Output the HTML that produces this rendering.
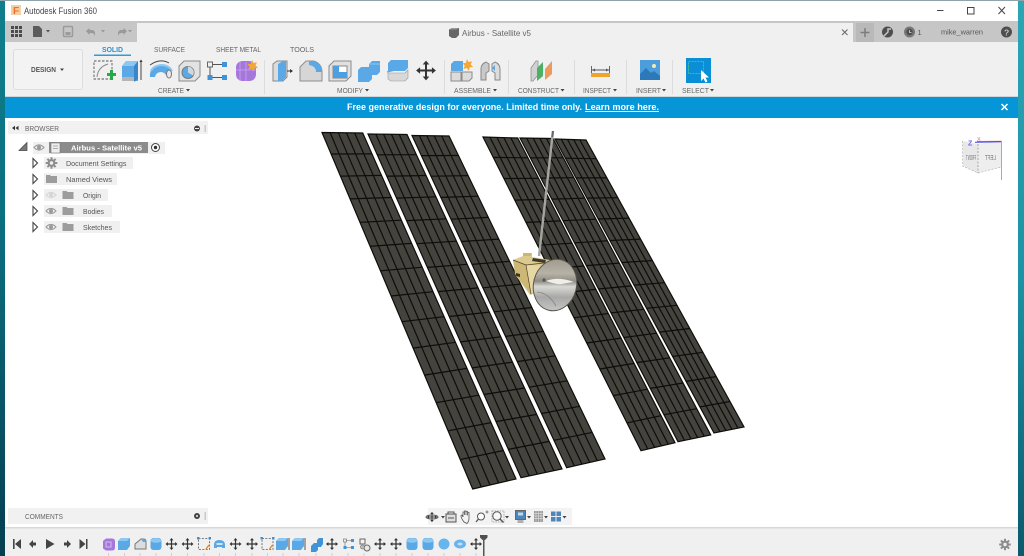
<!DOCTYPE html>
<html><head><meta charset="utf-8"><title>Autodesk Fusion 360</title>
<style>
html,body{margin:0;padding:0;background:#0a6f80;width:1024px;height:556px;overflow:hidden}
svg{display:block;position:absolute;left:0;top:0;filter:blur(.35px)}
text{font-family:"Liberation Sans",sans-serif;fill:#555}
</style></head><body>
<svg width="1024" height="556" viewBox="0 0 1024 556" xmlns="http://www.w3.org/2000/svg">
<defs>
<linearGradient id="tl" x1="0" y1="0" x2="0" y2="1"><stop offset="0" stop-color="#0f7f8c"/><stop offset=".4" stop-color="#0b6f80"/><stop offset="1" stop-color="#063f50"/></linearGradient>
<linearGradient id="tr" x1="0" y1="0" x2="0" y2="1"><stop offset="0" stop-color="#2aa6b4"/><stop offset=".5" stop-color="#1c93a6"/><stop offset="1" stop-color="#0a5a6c"/></linearGradient>
<linearGradient id="dish" x1=".3" y1="0" x2=".5" y2="1"><stop offset="0" stop-color="#9d988c"/><stop offset=".3" stop-color="#b7b2a6"/><stop offset=".45" stop-color="#8f8c84"/><stop offset=".55" stop-color="#d9d8d4"/><stop offset=".75" stop-color="#a8a8a6"/><stop offset="1" stop-color="#c4c4c2"/></linearGradient>
<g id="mv" fill="#333"><path d="M-.6-4h1.2v8h-1.2zM-4-.6h8v1.2h-8z"/><path d="M0-6l2 2.4h-4zM0 6l2-2.4h-4zM-6 0l2.4-2v4zM6 0l-2.4-2v4z"/></g>
<g id="cyl"><rect x="-5.5" y="-6" width="11" height="12" rx="3" fill="#5aa9e6"/><ellipse cx="0" cy="-3.5" rx="5.5" ry="2.3" fill="#8cc8f2"/></g>
<g id="box"><path d="M-6-3l3-3h9v8l-3 4h-9z" fill="#5aa9e6"/><path d="M-6-3h9l3-3h-9z" fill="#8cc8f2"/></g>
<g id="sk" fill="none"><rect x="-5.5" y="-5.5" width="11" height="11" stroke="#555" stroke-width=".8" stroke-dasharray="2 1.4"/><path d="M2 5l3-4" stroke="#e8852b" stroke-width="1.4"/><rect x="-7" y="-7" width="2.4" height="2.4" fill="#3f8fd0"/><rect x="4.6" y="-7" width="2.4" height="2.4" fill="#3f8fd0"/></g>
<g id="eye"><path d="M-5 0q5-5 10 0q-5 5-10 0z" fill="none" stroke="#9a9a9a" stroke-width="1.1"/><circle r="2" fill="#9a9a9a"/></g>
<path id="folder" d="M-5.5-4h4l1 1h6v7h-11z" fill="#9c9c9c"/>
<path id="exp" d="M0-4.5l4.5 4.5l-4.5 4.5z" fill="#fff" stroke="#444" stroke-width="1.1"/>
<g id="gear" fill="#8d8d8d"><circle r="3.9"/><path d="M-1-5.8h2v11.6h-2zM-5.8-1h11.6v2h-11.6z"/><path d="M-1-5.8h2v11.6h-2z" transform="rotate(45)"/><path d="M-1-5.8h2v11.6h-2z" transform="rotate(-45)"/><circle r="1.7" fill="#f0f0f0"/></g>
</defs>

<!-- desktop -->
<rect width="6" height="556" fill="url(#tl)"/>
<rect x="1018" width="6" height="556" fill="url(#tr)"/>
<rect x="5" y="0" width="1013" height="556" fill="#fff"/>
<rect x="0" y="0" width="1024" height="1" fill="#8fa3a8"/>

<!-- title bar -->
<rect x="11" y="5" width="10" height="10" fill="#f7cfa6"/>
<text x="13" y="14" font-size="10" font-weight="bold" style="fill:#e8722a">F</text>
<text x="24" y="14" font-size="9" textLength="73" lengthAdjust="spacingAndGlyphs" style="fill:#444">Autodesk Fusion 360</text>
<path d="M937 10.5h6.5" stroke="#444" stroke-width="1"/>
<rect x="967.5" y="7.5" width="6.5" height="6.5" fill="none" stroke="#444"/>
<path d="M998.5 7l6.5 7M1005 7l-6.5 7" stroke="#444"/>

<!-- tab bar -->
<rect x="5" y="21" width="1013" height="21" fill="#c6c6c6"/>
<rect x="137" y="23" width="716" height="19" fill="#f0f0f0"/>
<g fill="#4b4b4b"><rect x="11" y="26" width="3" height="3"/><rect x="15" y="26" width="3" height="3"/><rect x="19" y="26" width="3" height="3"/><rect x="11" y="30" width="3" height="3"/><rect x="15" y="30" width="3" height="3"/><rect x="19" y="30" width="3" height="3"/><rect x="11" y="34" width="3" height="3"/><rect x="15" y="34" width="3" height="3"/><rect x="19" y="34" width="3" height="3"/></g>
<path d="M33 26h6l3 3v8h-9z" fill="#5c5c5c"/><path d="M46 30h4l-2 2.5z" fill="#555"/>
<rect x="63.500" y="26.500" width="9" height="10" rx="1" fill="none" stroke="#9b9b9b" stroke-width="1.5"/><rect x="65.500" y="32" width="5" height="3" fill="#9b9b9b"/>
<path d="M86 31l3.500-3v2h3q3 .5 2.500 6q-1-3-3-3h-2.500v2z" fill="#999"/><path d="M101 30h4l-2 2.500z" fill="#999"/>
<path d="M127 31l-3.500-3v2h-3q-3 .5-2.500 6q1-3 3-3h2.500v2z" fill="#999"/><path d="M128 30h4l-2 2.500z" fill="#999"/>
<path d="M449 29.500l3-1.500h7v7l-3 3h-4l-3-2z" fill="#666"/><path d="M449 29.500h7l3-1.500h-7z" fill="#999"/>
<text x="462" y="36" font-size="8.500" textLength="69" lengthAdjust="spacingAndGlyphs" style="fill:#666">Airbus - Satellite v5</text>
<path d="M842 29.500l5.500 5.500M847.500 29.500l-5.500 5.500" stroke="#666" stroke-width="1"/>
<rect x="856" y="23" width="18" height="19" fill="#b9b9b9"/>
<path d="M865 28v9M860.500 32.500h9" stroke="#7c7c7c" stroke-width="1.500"/>
<circle cx="887.500" cy="32" r="5.500" fill="#4e4e4e"/><path d="M884 36l4-4v-3h3" stroke="#c6c6c6" stroke-width="1.500" fill="none"/>
<circle cx="909.500" cy="32" r="5.500" fill="#777"/><circle cx="909.500" cy="32" r="3.200" fill="#4e4e4e"/><path d="M909.500 30v2.500h2" stroke="#bbb" fill="none"/>
<text x="917.500" y="35" font-size="7.500" style="fill:#555">1</text>
<text x="941" y="34.500" font-size="7.500" textLength="42" lengthAdjust="spacingAndGlyphs" style="fill:#555">mike_warren</text>
<circle cx="1006.500" cy="32" r="5.500" fill="#4e4e4e"/><text x="1004" y="35.500" font-size="8.500" font-weight="bold" style="fill:#c6c6c6">?</text>

<!-- toolbar -->
<rect x="5" y="42" width="1013" height="54" fill="#f0f0f0"/>
<rect x="5" y="96" width="1013" height="1" fill="#cfd6da"/>
<rect x="13.500" y="49.500" width="69" height="40" rx="2" fill="#f3f3f3" stroke="#dedede"/>
<text x="31" y="72" font-size="7" font-weight="bold" textLength="25" lengthAdjust="spacingAndGlyphs">DESIGN</text>
<path d="M60 68.500h4l-2 2.500z" fill="#444"/>
<text x="102" y="52" font-size="7" font-weight="bold" textLength="21" lengthAdjust="spacingAndGlyphs" style="fill:#2f8fd0">SOLID</text>
<rect x="94" y="54.500" width="37" height="1.500" fill="#2f9bdc"/>
<text x="154" y="52" font-size="7" textLength="31" lengthAdjust="spacingAndGlyphs" style="fill:#666">SURFACE</text>
<text x="216" y="52" font-size="7" textLength="45" lengthAdjust="spacingAndGlyphs" style="fill:#666">SHEET METAL</text>
<text x="290" y="52" font-size="7" textLength="24" lengthAdjust="spacingAndGlyphs" style="fill:#666">TOOLS</text>

<!-- separators -->
<g fill="#dcdcdc"><rect x="264" y="60" width="1" height="34"/><rect x="444" y="60" width="1" height="34"/><rect x="508" y="60" width="1" height="34"/><rect x="574" y="60" width="1" height="34"/><rect x="626" y="60" width="1" height="34"/><rect x="672" y="60" width="1" height="34"/></g>

<!-- CREATE icons -->
<rect x="94" y="61" width="18" height="18" fill="none" stroke="#555" stroke-width=".9" stroke-dasharray="2.500 1.500"/>
<path d="M97 77q1-10 11-13" fill="none" stroke="#888"/>
<path d="M108 72h3v-3h3v3h3v3h-3v4h-3v-4h-3z" fill="#29a84a" transform="translate(-1 1)"/>
<path d="M122 66l4-5h12v20h-1l-3 0h-12z" fill="#5aa9e6"/><path d="M122 66l4-5h12l-4 5z" fill="#8cc8f2"/><path d="M134 66l4-5v18l-4 3z" fill="#3b86c7"/><rect x="122" y="77" width="12" height="4" fill="#b5b5b5"/>
<path d="M141 60v20" stroke="#444"/><path d="M139.500 62l1.500-2.500 1.500 2.500z" fill="#333"/>
<path d="M150 77q-1-11 11-12q9 0 11 6l-5 6q-2-5-6-5q-5 0-6 5z" fill="#5aa9e6"/><path d="M151 71q2-5 10-6q8 0 11 6" fill="none" stroke="#8cc8f2" stroke-width="2"/><ellipse cx="169" cy="74" rx="2.500" ry="4" fill="#e8e8e8" stroke="#777"/>
<path d="M150 65q10-7 19-2" fill="none" stroke="#444"/>
<path d="M179 66l5-5h16v15l-5 5h-16z" fill="#e2e2e2" stroke="#8a8a8a"/><circle cx="188" cy="72.500" r="6" fill="#5aa9e6" stroke="#777"/><path d="M188 72.500v-6a6 6 0 0 1 5 9z" fill="#cfd8de"/>
<rect x="207.500" y="62" width="5" height="5" fill="#f0f0f0" stroke="#666"/><rect x="222" y="62" width="5" height="5" fill="#3f93d6"/><rect x="207.500" y="75" width="5" height="5" fill="#3f93d6"/><rect x="222" y="75" width="5" height="5" fill="#3f93d6"/><path d="M212.500 64.500h9.500M210 67v8M212.500 77.500h9.500" stroke="#555"/>
<path d="M236 68q0-6 6-7h8q6 2 6 8v6q-1 6-7 6h-7q-6-1-6-7z" fill="#a576dc"/><path d="M236 70h20M246 62v19M240 62v19" stroke="#c7a6ea" stroke-width=".8"/>
<path d="M252 60l1.500 3 3.500-.8-1.500 3.200 2.500 2.400-3.500.4-.7 3.400-2.200-2.800-3.300 1 1.400-3.200-2.300-2.500 3.400-.4z" fill="#f4a733"/>

<!-- MODIFY icons -->
<path d="M273 64l4-3h10v16l-4 4h-10z" fill="#dcdcdc" stroke="#888"/><path d="M278 64l5-3h3v16l-4 4h-4z" fill="#5aa9e6"/><path d="M287 71h5" stroke="#333"/><path d="M290 69l3 2-3 2z" fill="#333"/>
<path d="M300 81v-14l6-6h8q8 3 8 11v9z" fill="#d6d6d6" stroke="#8f8f8f"/><path d="M309 61h5q8 3 8 11l-6 0q0-6-7-7z" fill="#5aa9e6"/>
<path d="M329 81v-15l5-5h17v15l-5 5z" fill="#e0e0e0" stroke="#8c8c8c"/><rect x="333" y="66" width="14" height="12" fill="#fff" stroke="#888"/><path d="M333 66h6v6h8v6h-14z" fill="#4c9fe0"/>
<path d="M358 70l3-3h8v-3l3-3h8v11l-3 3h-5v4l-3 3h-11z" fill="#5aa9e6"/><path d="M369 64h11" stroke="#8cc8f2"/>
<path d="M388 63l3-3h17v8l-3 3h-17z" fill="#5aa9e6"/><path d="M387 72l21-5" stroke="#5aa9e6" stroke-width="1.200"/><path d="M388 73h17l3-3v8l-3 3h-14l-3-2z" fill="#d8d8d8" stroke="#999" stroke-width=".6"/>
<g transform="translate(426 70.500) scale(1.650)"><use href="#mv"/></g>

<!-- ASSEMBLE -->
<path d="M451 71v-7l3-3h9v10z" fill="#5aa9e6"/><path d="M451 72h10v9h-10zM462 72h10v6l-3 3h-7z" fill="#dcdcdc" stroke="#8c8c8c"/>
<path d="M467 59l1.500 3 3.500-.6-1.300 3.200 2.500 2.400-3.500.4-.8 3.300-2.200-2.700-3.300 1 1.400-3.200-2.300-2.500 3.400-.4z" fill="#f4a733"/>
<path d="M481 80v-11q0-5 5-7l3 2v7l-3 2v7z" fill="#c9c9c9" stroke="#888"/><path d="M500 80v-11q0-5-5-7l-3 2v7l3 2v7z" fill="#dcdcdc" stroke="#888"/><path d="M492 68l3-3v6z" fill="#5aa9e6"/>

<!-- CONSTRUCT -->
<path d="M531 68l5-7h2v14l-5 6h-2z" fill="#d2d2d2" stroke="#8b8b8b" stroke-width=".7"/>
<path d="M537 68l6-6v14l-6 5z" fill="#4bb164"/>
<path d="M545 69l7-8v13l-7 6z" fill="#eb9a5c"/>

<!-- INSPECT -->
<path d="M591.500 66v9M609.500 66v9" stroke="#666"/><path d="M592 70h17" stroke="#555"/><path d="M592 70l3-1.500v3zM609 70l-3-1.500v3z" fill="#555"/>
<rect x="591" y="73" width="19" height="4" fill="#f0a32a"/>

<!-- INSERT -->
<rect x="640" y="60" width="20" height="20" fill="#4b9edb"/><path d="M640 80v-6l6-6 5 5 3-2 6 5v4z" fill="#2b79b8"/><circle cx="654" cy="66" r="2" fill="#f4e9b4"/>

<!-- SELECT -->
<rect x="686" y="58" width="25" height="25" fill="#0a8fd6"/>
<rect x="688.500" y="61.500" width="15" height="12" fill="none" stroke="#5cc98c" stroke-width=".8" stroke-dasharray="2 1"/>
<path d="M701 70v11l2.500-2.500 2 4 2-1-2-4h3.500z" fill="#fff"/>

<!-- labels -->
<g font-size="7">
<text x="158" y="93" textLength="26" lengthAdjust="spacingAndGlyphs" style="fill:#666">CREATE</text><path d="M186 89h4l-2 2.500z" fill="#444"/>
<text x="337" y="93" textLength="26" lengthAdjust="spacingAndGlyphs" style="fill:#666">MODIFY</text><path d="M365 89h4l-2 2.500z" fill="#444"/>
<text x="454" y="93" textLength="37" lengthAdjust="spacingAndGlyphs" style="fill:#666">ASSEMBLE</text><path d="M493 89h4l-2 2.500z" fill="#444"/>
<text x="518" y="93" textLength="41" lengthAdjust="spacingAndGlyphs" style="fill:#666">CONSTRUCT</text><path d="M560.500 89h4l-2 2.500z" fill="#444"/>
<text x="583" y="93" textLength="28" lengthAdjust="spacingAndGlyphs" style="fill:#666">INSPECT</text><path d="M613 89h4l-2 2.500z" fill="#444"/>
<text x="636" y="93" textLength="25" lengthAdjust="spacingAndGlyphs" style="fill:#666">INSERT</text><path d="M662 89h4l-2 2.500z" fill="#444"/>
<text x="682" y="93" textLength="27" lengthAdjust="spacingAndGlyphs" style="fill:#666">SELECT</text><path d="M710 89h4l-2 2.500z" fill="#444"/>
</g>

<!-- banner -->
<rect x="5" y="97" width="1013" height="21" fill="#0696d7"/>
<text x="347" y="110" font-size="9.500" font-weight="bold" textLength="235" lengthAdjust="spacingAndGlyphs" style="fill:#fff">Free generative design for everyone. Limited time only.</text>
<text x="585" y="110" font-size="9.500" font-weight="bold" textLength="74" lengthAdjust="spacingAndGlyphs" text-decoration="underline" style="fill:#fff">Learn more here.</text>
<path d="M1001.500 104l6 6M1007.500 104l-6 6" stroke="#fff" stroke-width="1.500"/>

<!-- satellite wings -->
<g id="wings"></g>
<path d="M553 131L539 256" stroke="#a5a5a0" stroke-width="2.400"/>
<path d="M553 131l-.8 6" stroke="#666" stroke-width="2"/>
<!-- body -->
<path d="M513 260l10-4v-3h9v4l18 3 4 6-21 28-3 1-14-19z" fill="#dcc98e"/>
<path d="M513 260l13 5 5 29-16-20z" fill="#cdb775"/>
<path d="M526 265l6 0 21 2-22 27z" fill="#e6d7a3"/>
<path d="M513 260l13 5 27-3M526 265l5 29" stroke="#4a4228" stroke-width=".7" fill="none"/>
<path d="M523 256h8v-3h-8z" fill="#c9b779"/>
<path d="M533 258l13 2-1 3-13-2z" fill="#3e3a2a"/>
<path d="M516 273l4 1v3l-4-1z" fill="#3a3524"/>
<ellipse cx="555" cy="285" rx="21.500" ry="26" transform="rotate(14 555 285)" fill="url(#dish)" stroke="#55554f" stroke-width="1"/>
<path d="M546 281q12-5 28 1q-8 1-12 2t-16-3z" fill="#efeeea"/>
<path d="M537 292q12 1 19 14" fill="none" stroke="#808080" stroke-width=".8"/>
<ellipse cx="544" cy="280" rx="1.500" ry="1.800" fill="#555"/>

<!-- viewcube -->
<path d="M962.500 141l15.500 3v29l-15-7z" fill="#e8e8e8"/><path d="M978 144l23-3v26l-23 6z" fill="#eeeeee"/>
<path d="M978 144v29" stroke="#888" stroke-width=".7" stroke-dasharray="2 1.500"/>
<path d="M962.500 141v25l15.500 7l23-6" fill="none" stroke="#aaa" stroke-width=".6" stroke-dasharray="2 1.500"/>
<text transform="translate(976 160) scale(-1 1)" font-size="7" textLength="10" lengthAdjust="spacingAndGlyphs" style="fill:#777">FRONT</text>
<text transform="translate(996 160) scale(-1 1)" font-size="7.500" textLength="11" lengthAdjust="spacingAndGlyphs" style="fill:#777">LEFT</text>
<path d="M977 141.500l25-.3" stroke="#ff6a6a" stroke-width="1"/><path d="M975 142.200l26-.4" stroke="#3a3ae0" stroke-width="1"/>
<path d="M1001.500 141v39" stroke="#5fe05f" stroke-width="1"/>
<text x="968" y="145.500" font-size="7" font-weight="bold" style="fill:#6a6ae8">Z</text>
<text x="977" y="141" font-size="5.500" style="fill:#e66">X</text>

<!-- browser -->
<rect x="8" y="121" width="200" height="13" fill="#f1f1f1"/>
<path d="M13 128l3-2.200v4.400zM16.500 128l3-2.200v4.400z" fill="#333" transform="translate(-1 0)"/>
<text x="25" y="131" font-size="7" textLength="34" lengthAdjust="spacingAndGlyphs" style="fill:#666">BROWSER</text>
<circle cx="197" cy="128.500" r="3" fill="#444"/><path d="M195 128.500h4" stroke="#eee"/>
<rect x="204.500" y="125" width="1.500" height="7" fill="#c9c9c9"/>

<path d="M19 150.500l8-8v8z" fill="#777" stroke="#444" stroke-width=".7"/>
<rect x="33" y="142" width="132" height="12" fill="#f0f0f0"/>
<use href="#eye" x="39" y="147.500"/>
<rect x="49" y="142" width="99" height="11" fill="#8b8b8b"/>
<rect x="51" y="143" width="9" height="10" fill="#eeeeee" stroke="#777" stroke-width=".6"/>
<path d="M53 146h5M53 148.500h5" stroke="#999" stroke-width=".7"/>
<text x="71" y="150.500" font-size="7.500" font-weight="bold" textLength="71" lengthAdjust="spacingAndGlyphs" style="fill:#fff">Airbus - Satellite v5</text>
<circle cx="155.500" cy="147.500" r="4" fill="#fff" stroke="#444"/><circle cx="155.500" cy="147.500" r="1.700" fill="#333"/>

<rect x="44" y="157" width="89" height="12" fill="#f0f0f0"/>
<use href="#exp" x="33" y="163"/><use href="#gear" x="51.500" y="163"/>
<text x="66" y="166" font-size="7.500" textLength="60.500" lengthAdjust="spacingAndGlyphs">Document Settings</text>

<rect x="44" y="173" width="73" height="12" fill="#f0f0f0"/>
<use href="#exp" x="33" y="179"/><use href="#folder" x="51.500" y="179"/>
<text x="66" y="182" font-size="7.500" textLength="46" lengthAdjust="spacingAndGlyphs">Named Views</text>

<rect x="44" y="189" width="64" height="12" fill="#f0f0f0"/>
<use href="#exp" x="33" y="195"/><use href="#eye" x="51" y="195" opacity=".3"/><use href="#folder" x="68" y="195"/>
<text x="83" y="198" font-size="7.500" textLength="18" lengthAdjust="spacingAndGlyphs">Origin</text>

<rect x="44" y="205" width="68" height="12" fill="#f0f0f0"/>
<use href="#exp" x="33" y="211"/><use href="#eye" x="51" y="211"/><use href="#folder" x="68" y="211"/>
<text x="83" y="214" font-size="7.500" textLength="21" lengthAdjust="spacingAndGlyphs">Bodies</text>

<rect x="44" y="221" width="76" height="12" fill="#f0f0f0"/>
<use href="#exp" x="33" y="227"/><use href="#eye" x="51" y="227"/><use href="#folder" x="68" y="227"/>
<text x="83" y="230" font-size="7.500" textLength="29" lengthAdjust="spacingAndGlyphs">Sketches</text>

<!-- comments -->
<rect x="8" y="508" width="200" height="16" fill="#f1f1f1"/>
<text x="25" y="519" font-size="7" textLength="38" lengthAdjust="spacingAndGlyphs" style="fill:#666">COMMENTS</text>
<circle cx="197" cy="516" r="3" fill="#444"/><circle cx="197" cy="516" r="1" fill="#eee"/>
<rect x="204.500" y="512" width="1.500" height="8" fill="#c9c9c9"/>

<!-- nav bar -->
<rect x="428" y="508" width="144" height="17" fill="#f3f3f3"/>
<g transform="translate(432 517) scale(.85)"><use href="#mv"/></g><ellipse cx="432" cy="517" rx="6" ry="2" fill="none" stroke="#555"/>
<path d="M441 516h4l-2 2.500z" fill="#444"/>
<rect x="446" y="514" width="10" height="8" fill="#ddd" stroke="#555"/><path d="M448 514v-2h6v2M448 518h6" stroke="#555" fill="none"/>
<path d="M464 522q-3-4-3-6q0-1 1-1l1 2v-5h1.500v3v-4h1.500v4v-3.500h1.500v4v-3h1.500v6q0 3-2 5z" fill="#f3f3f3" stroke="#555" stroke-width=".8"/>
<circle cx="481" cy="516.500" r="3.500" fill="#fff" stroke="#555"/><path d="M478.500 519l-2.500 3" stroke="#555" stroke-width="1.300"/><path d="M485.500 512h3M487 510.500v3" stroke="#555" stroke-width=".7"/>
<rect x="492" y="511" width="12" height="11" fill="none" stroke="#aaa" stroke-dasharray="1.500 1"/><circle cx="497" cy="516" r="4.200" fill="#f8f8f8" stroke="#555"/><path d="M500 519l3.500 3.500" stroke="#555" stroke-width="1.400"/>
<path d="M505 516h4l-2 2.500z" fill="#444"/>
<rect x="515.500" y="510.500" width="10" height="9" fill="#4f86b8" stroke="#666"/><rect x="518" y="512.500" width="5" height="3" fill="#bcd7ee"/><path d="M517.500 520h6v3h-6z" fill="#b0b0b0"/>
<path d="M527 516h4l-2 2.500z" fill="#444"/>
<rect x="534" y="511" width="9" height="11" fill="#999"/><path d="M536 511v11M538.500 511v11M541 511v11M534 513.500h9M534 516h9M534 518.500h9" stroke="#f0f0f0" stroke-width=".5"/>
<path d="M544 516h4l-2 2.500z" fill="#444"/>
<rect x="551" y="511.500" width="10" height="10" fill="#4f86b8"/><path d="M556 511.500v10M551 516.500h10" stroke="#e8eef4"/>
<path d="M562.500 516h4l-2 2.500z" fill="#444"/>

<!-- timeline -->
<rect x="5" y="527" width="1013" height="1.500" fill="#d8d8d8"/>
<rect x="5" y="528.500" width="1013" height="27.500" fill="#f0f0f0"/>
<g fill="#444">
<path d="M13 539h1.600v10H13zM15 544l6-5v10z"/>
<path d="M29 544l4-4v2.500h3v3h-3V548z"/>
<path d="M46 539l8.500 5-8.500 5z"/>
<path d="M71 544l-4-4v2.500h-3v3h3V548z"/>
<path d="M87.500 539H86v10h1.500zM85.500 544l-6-5v10z"/>
</g>
<path d="M103 541l3-2.500h6q3 0 3 3v6q0 3-3 3h-6l-3-2z" fill="#a576dc"/><rect x="106" y="542" width="5" height="5" fill="none" stroke="#d3bdf0"/>
<use href="#box" x="124" y="544"/>
<path d="M135 549v-5l6-5h3q2 0 2 3v7z" fill="#ddd" stroke="#777"/><path d="M141 539h3q2 0 2 3h-3z" fill="#5aa9e6"/>
<use href="#cyl" x="156" y="544"/>
<use href="#mv" x="171.500" y="544"/><use href="#mv" x="187.500" y="544"/>
<use href="#sk" x="204" y="544"/>
<path d="M214 548v-3q0-5 5-5q6 0 6 5v3h-3v-1h-5v1z" fill="#5aa9e6"/><rect x="216.500" y="543" width="6" height="2" fill="#cfe3f3"/>
<use href="#mv" x="235.500" y="544"/><use href="#mv" x="252" y="544"/>
<use href="#sk" x="267.500" y="544"/>
<use href="#box" x="282" y="544"/><path d="M289 538v12" stroke="#555"/>
<use href="#box" x="298" y="544"/><path d="M305 538v12" stroke="#555"/>
<path d="M311 546l3-3h3v-3l2-2h4v6l-2 3h-3v3l-2 2h-5z" fill="#3f93d6"/>
<use href="#mv" x="332" y="544"/>
<g fill="#3f93d6"><rect x="343.500" y="539" width="3" height="3" fill="#eee" stroke="#666" stroke-width=".6"/><rect x="351" y="539" width="3" height="3"/><rect x="343.500" y="546" width="3" height="3"/><rect x="351" y="546" width="3" height="3"/></g><path d="M346 540.500h5M345 542v4M346 547.500h5" stroke="#666" stroke-width=".6"/>
<path d="M360 539h5v5h-5z" fill="#f2f2f2" stroke="#666"/><circle cx="367" cy="548" r="3" fill="#e8e8e8" stroke="#666"/><circle cx="362.500" cy="547" r="2" fill="#bbb" stroke="#666" stroke-width=".6"/>
<use href="#mv" x="380" y="544"/><use href="#mv" x="396" y="544"/>
<use href="#cyl" x="412" y="544"/><use href="#cyl" x="428" y="544"/>
<circle cx="444" cy="544" r="5.500" fill="#68b5ee"/>
<ellipse cx="460" cy="544" rx="6" ry="4.500" fill="#68b5ee"/><ellipse cx="460" cy="544" rx="2.500" ry="1.500" fill="#c4def4"/>
<use href="#mv" x="476" y="544"/>
<g stroke="#c4c4c4" stroke-width=".7"><path d="M108.500 553v3M124.500 553v3M140 553v3M156 553v3M171.500 553v3M187.500 553v3M204 553v3M219.500 553v3M235.500 553v3M252 553v3M267.500 553v3M283 553v3M299 553v3M316 553v3M332 553v3M348 553v3M364 553v3M380 553v3M396 553v3M412 553v3M428 553v3M444 553v3M460 553v3M476 553v3"/></g>
<path d="M480 535h7.500v2.500l-2.500 2.500h-2.500l-2.500-2.500z" fill="#4f4f4f"/><rect x="483" y="538" width="1.500" height="18" fill="#555"/>
<use href="#gear" x="1005" y="544.500"/>
</svg>
<script>
(function(){
var P=[
[322,132.500,362.700,133,516,479,472.700,489,14],
[368,134,407,134.500,562,469,521,477.700,14],
[412,135.500,449,136,605,459,566.700,467.700,14],
[483,137,517.700,138,675,442.700,641,450.700,13],
[520,138,553,138.500,710.700,435,678,441.700,13],
[555,139,586,140,744,427,714,433,13]];
var s='';
P.forEach(function(p){
 var n=p[8],S=5,d=[],tot=0,i;
 for(i=0;i<n;i++){var v=22+i*8/(n-1);tot+=v;d.push(tot);}
 var L=function(t){return [p[0]+(p[6]-p[0])*t,p[1]+(p[7]-p[1])*t];},
     R=function(t){return [p[2]+(p[4]-p[2])*t,p[3]+(p[5]-p[3])*t];},f=function(x){return x.toFixed(1);};
 s+='<polygon points="'+p[0]+','+p[1]+' '+p[2]+','+p[3]+' '+p[4]+','+p[5]+' '+p[6]+','+p[7]+'" fill="#45433d" stroke="#0d0d0a" stroke-width="1.200"/>';
 var D='';
 for(i=1;i<S;i++){var u=i/S;
  D+='M'+f(p[0]+(p[2]-p[0])*u)+' '+f(p[1]+(p[3]-p[1])*u)+'L'+f(p[6]+(p[4]-p[6])*u)+' '+f(p[7]+(p[5]-p[7])*u);}
 for(i=0;i<n-1;i++){var t=d[i]/tot,a=L(t),b=R(t);
  D+='M'+f(a[0])+' '+f(a[1])+'L'+f(b[0])+' '+f(b[1]);}
 s+='<path d="'+D+'" stroke="#0d0d0a" stroke-width="1.200" fill="none"/>';
});
document.getElementById('wings').innerHTML=s;
})();
</script>
</body></html>
